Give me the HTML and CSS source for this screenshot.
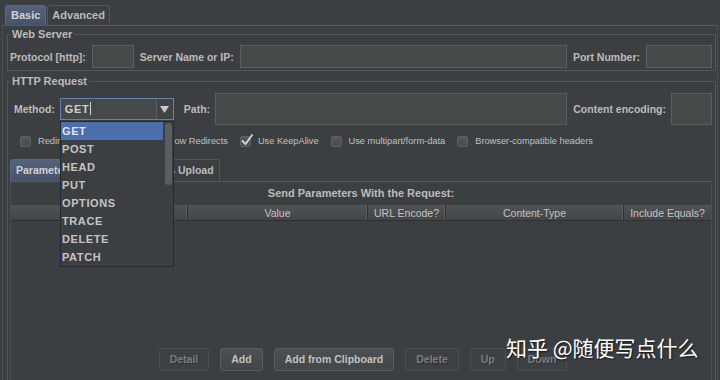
FILE: index.html
```html
<!DOCTYPE html>
<html lang="en">

<head>
    <meta charset="UTF-8">
    <title>HTTP Request</title>
    <link rel="stylesheet" href="styles.css">
</head>

<body>

    <div class="tabs">
        <div class="tab tab-active">Basic</div>
        <div class="tab">Advanced</div>
    </div>

    <div class="tab-body">

        <!-- Web Server -->
        <fieldset class="group">
            <legend>Web Server</legend>
            <div class="row server-row">
                <label>Protocol [http]:</label>
                <div class="field w-protocol"></div>
                <label>Server Name or IP:</label>
                <div class="field grow"></div>
                <label>Port Number:</label>
                <div class="field w-port"></div>
            </div>
        </fieldset>

        <!-- HTTP Request -->
        <fieldset class="group">
            <legend>HTTP Request</legend>
            <div class="row method-row">
                <label class="method-label">Method:</label>
                <div class="combo">
                    <span class="combo-value">GET<span class="caret"></span></span>
                    <span class="combo-arrow">
                        <svg width="9" height="7" viewBox="0 0 9 7"><polygon points="0,0 9,0 4.5,7" fill="#c8c8c8"/></svg>
                    </span>
                </div>
                <label>Path:</label>
                <div class="field field-tall grow"></div>
                <label>Content encoding:</label>
                <div class="field field-tall w-enc"></div>
            </div>

            <div class="options">
                <div class="option"><span class="check"></span>Redirect Automatically</div>
                <div class="option"><span class="check"></span>Follow Redirects</div>
                <div class="option">
                    <span class="check checked">
                        <svg width="14" height="14" viewBox="0 0 14 14"><path d="M2 7.5 L5.5 11 L12.5 1.5" fill="none" stroke="#d6d6d6" stroke-width="1.8"/></svg>
                    </span>Use KeepAlive
                </div>
                <div class="option"><span class="check"></span>Use multipart/form-data</div>
                <div class="option"><span class="check"></span>Browser-compatible headers</div>
            </div>

            <div class="subtabs">
                <div class="subtab subtab-active">Parameters</div>
                <div class="subtab">Body Data</div>
                <div class="subtab">Files Upload</div>
            </div>

            <div class="params">
                <div class="params-title">Send Parameters With the Request:</div>
                <div class="table-head">
                    <div class="col c-name">Name:</div>
                    <div class="col c-value">Value</div>
                    <div class="col c-url">URL Encode?</div>
                    <div class="col c-type">Content-Type</div>
                    <div class="col c-eq">Include Equals?</div>
                </div>
                <div class="table-body"></div>
                <div class="buttons">
                    <div class="btn disabled">Detail</div>
                    <div class="btn">Add</div>
                    <div class="btn">Add from Clipboard</div>
                    <div class="btn disabled">Delete</div>
                    <div class="btn disabled">Up</div>
                    <div class="btn disabled">Down</div>
                </div>
            </div>
        </fieldset>
    </div>

    <!-- Method combo popup -->
    <div class="popup">
        <ul class="popup-list">
            <li class="selected">GET</li>
            <li>POST</li>
            <li>HEAD</li>
            <li>PUT</li>
            <li>OPTIONS</li>
            <li>TRACE</li>
            <li>DELETE</li>
            <li>PATCH</li>
        </ul>
        <div class="scrollbar"><div class="thumb"></div></div>
    </div>

    <div class="watermark">知乎 @随便写点什么</div>

</body>

</html>
```

FILE: styles.css
```css
* {
    margin: 0;
    padding: 0;
    box-sizing: border-box;
}

body {
    position: relative;
    width: 720px;
    height: 380px;
    overflow: hidden;
    background: #3c3f41;
    color: #bbbbbb;
    font-family: "Liberation Sans", Arial, sans-serif;
    font-size: 10.5px;
    font-weight: bold;
}

/* top tabs */
.tabs {
    display: flex;
    height: 25px;
    padding: 5px 0 0 5px;
}

.tab {
    height: 20px;
    line-height: 19px;
    padding: 0 4px;
    font-size: 11px;
    border: 1px solid #555859;
    border-bottom: none;
    border-radius: 3px 3px 0 0;
    margin-right: 1px;
}

.tab-active {
    padding: 0 5px;
    background: linear-gradient(#55627b, #46526a);
    border-color: #5a6780;
    color: #d2d2d2;
}

.tab-body {
    height: 355px;
    margin: 0 2px;
    padding: 0 1px 0 4px;
    border-top: 1px solid #4e5b73;
    border-left: 1px solid #4b4e50;
    border-right: 1px solid #4b4e50;
}

/* titled groups */
.group {
    border: 1px solid #545759;
    padding: 0 2px 2px;
    margin-top: 1px;
}

.group + .group {
    margin-top: 3px;
    border-bottom: none;
}

legend {
    padding: 0 2px;
    font-size: 11px;
    line-height: 14px;
}

.row {
    display: flex;
    align-items: center;
}

.server-row {
    height: 23px;
    margin-top: 4px;
}

.server-row label {
    margin-right: 6px;
}

.field {
    height: 23px;
    background: #45494a;
    border: 1px solid #5b5e60;
    margin-right: 6px;
}

.field:last-child {
    margin-right: 1px;
}

.grow {
    flex: 1;
}

.w-protocol {
    width: 42px;
}

.w-port {
    width: 66px;
}

/* method row */
.method-row {
    height: 32px;
    margin-top: 5px;
}

.method-row label {
    margin-right: 5px;
}

.method-label {
    margin-left: 4px;
}

.field-tall {
    height: 32px;
}

.w-enc {
    width: 41px;
}

.combo {
    display: flex;
    width: 114px;
    height: 22px;
    margin-right: 10px;
    background: #45494a;
    border: 1px solid #6381ad;
}

.combo-value {
    flex: 1;
    padding-left: 4px;
    line-height: 20px;
    font-size: 11px;
    letter-spacing: 0.6px;
    color: #cfcfcf;
}

.caret {
    display: inline-block;
    width: 1px;
    height: 13px;
    margin-left: 1px;
    vertical-align: -2px;
    background: #d0d0d0;
}

.combo-arrow {
    display: flex;
    align-items: center;
    justify-content: center;
    width: 17px;
    border-left: 1px solid #5b5e60;
    background: #414446;
}

/* checkbox row */
.options {
    display: flex;
    align-items: center;
    height: 16px;
    margin-top: 8px;
    padding-left: 10px;
    font-size: 9.25px;
    font-weight: normal;
    color: #c0c0c0;
}

.option {
    display: flex;
    align-items: center;
    margin-right: 12px;
}

.check {
    position: relative;
    width: 11px;
    height: 11px;
    margin-right: 7px;
    border: 1px solid #5e6163;
    border-radius: 2px;
    background: linear-gradient(#56595b, #494c4e);
}

.check svg {
    position: absolute;
    left: -1px;
    top: -4px;
}

/* parameter tabs */
.subtabs {
    display: flex;
    height: 23px;
    margin-top: 9px;
    padding-top: 1px;
}

.subtab {
    height: 22px;
    line-height: 21px;
    padding: 0 5px;
    font-size: 10.5px;
    border: 1px solid #555859;
    border-bottom: none;
    border-radius: 3px 3px 0 0;
    margin-right: 1px;
}

.subtab-active {
    background: linear-gradient(#55627b, #46526a);
    border-color: #5a6780;
    color: #d2d2d2;
}

.params {
    margin-right: 1px;
    border-top: 1px solid #4e5b73;
    border-left: 1px solid #4b4e50;
    border-right: 1px solid #4b4e50;
    height: 200px;
}

.params-title {
    padding-top: 4px;
    line-height: 14px;
    text-align: center;
    font-size: 11px;
}

.table-head {
    display: flex;
    height: 16px;
    margin-top: 5px;
    background: linear-gradient(#505356, #424548);
    border-bottom: 1px solid #2f3133;
    font-weight: normal;
    font-size: 10.5px;
    color: #c4c4c4;
}

.col {
    line-height: 16px;
    text-align: center;
    border-right: 1px solid #2e3032;
    box-shadow: inset -1px 0 0 #5a5d60;
}

.c-name { width: 177px; }
.c-value { width: 180px; }
.c-url { width: 78px; }
.c-type { width: 178px; }
.c-eq { flex: 1; border-right: none; box-shadow: none; }

.table-body {
    height: 127px;
}

.buttons {
    display: flex;
    justify-content: center;
    gap: 11px;
    padding-left: 4px;
}

.btn {
    height: 23px;
    line-height: 21px;
    padding: 0 10px;
    border: 1px solid #5a5d60;
    border-radius: 3px;
    background: linear-gradient(#4c5052, #434648);
    color: #c0c0c0;
}

.btn.disabled {
    padding: 0 10px;
    border-color: #4c4f52;
    background: #3e4143;
    color: #7c7e81;
    text-shadow: 1px 1px 0 #2d2f31;
}

/* dropdown popup */
.popup {
    position: absolute;
    left: 60px;
    top: 121px;
    width: 114px;
    height: 146px;
    display: flex;
    background: #3c3f41;
    border: 1px solid #262829;
}

.popup-list {
    list-style: none;
    width: 102px;
}

.popup-list li {
    height: 18px;
    line-height: 18px;
    padding-left: 1px;
    font-size: 11px;
    letter-spacing: 0.6px;
    color: #c4c4c4;
}

.popup-list .selected {
    background: #4b6eaf;
    color: #e4e4e4;
}

.scrollbar {
    flex: 1;
    padding: 1px 1px 0 2px;
}

.thumb {
    height: 62px;
    border-radius: 3px;
    background: #5b5e61;
}

.watermark {
    position: absolute;
    left: 506px;
    top: 332px;
    font-family: "Noto Sans CJK SC", sans-serif;
    font-size: 21px;
    font-weight: normal;
    color: #ffffff;
    text-shadow: 1px 1px 2px rgba(0, 0, 0, 0.7);
}
```
